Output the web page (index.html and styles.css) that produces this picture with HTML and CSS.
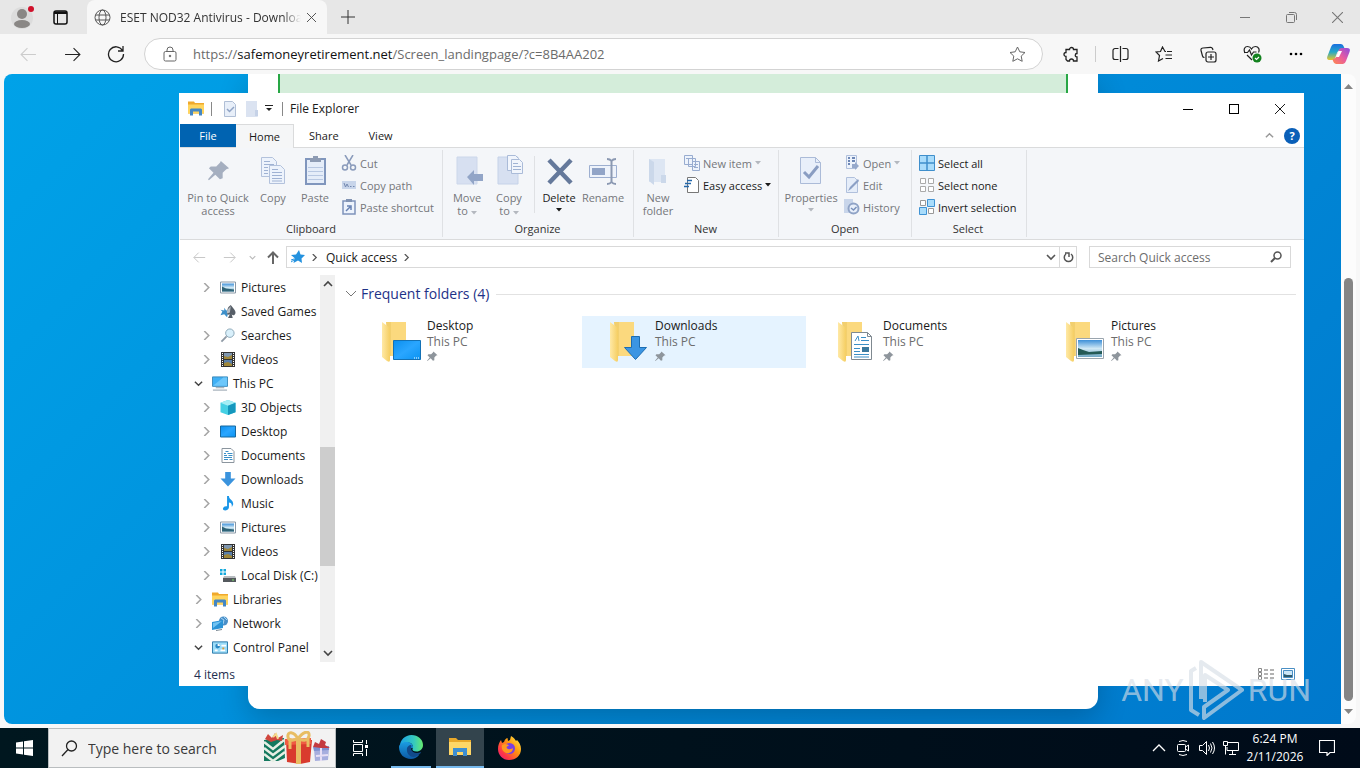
FILE: index.html
```html
<!DOCTYPE html>
<html lang="en">
<head>
    <meta charset="UTF-8">
    <meta name="viewport" content="width=device-width, initial-scale=1.0">
    <title>Desktop</title>
    <link rel="stylesheet" href="styles.css">
</head>
<body>
    <!-- shared icons -->
    <svg class="sprite" aria-hidden="true">
        <defs>
            <linearGradient id="gFolder" x1="0" x2="1"><stop offset="0" stop-color="#ffe9a6"/><stop offset="1" stop-color="#f5ce62"/></linearGradient>
            <linearGradient id="gBlue" x1="0" y1="0" x2="1" y2="1"><stop offset="0" stop-color="#0b8fee"/><stop offset=".5" stop-color="#2aa6ff"/><stop offset="1" stop-color="#0a93f2"/></linearGradient>
            <linearGradient id="gSky" x1="0" y1="0" x2="0" y2="1"><stop offset="0" stop-color="#3d8fd8"/><stop offset=".5" stop-color="#cfe8f5"/><stop offset="1" stop-color="#6fa7c4"/></linearGradient>
            <linearGradient id="gEdge1" x1="0" y1="0" x2="1" y2="0"><stop offset="0" stop-color="#1ba1e6"/><stop offset=".6" stop-color="#35c9c0"/><stop offset="1" stop-color="#66eb6e"/></linearGradient>
            <linearGradient id="gEdge2" x1="0" y1="0" x2="0" y2="1"><stop offset="0" stop-color="#1b9de2"/><stop offset="1" stop-color="#0c59a4"/></linearGradient>
            <linearGradient id="gFox" x1="1" y1="0" x2="0" y2="1"><stop offset="0" stop-color="#fff44f"/><stop offset=".4" stop-color="#ff980e"/><stop offset=".75" stop-color="#ff3647"/><stop offset="1" stop-color="#e31587"/></linearGradient>
            <linearGradient id="gCop1" x1="0" y1="0" x2="0" y2="1"><stop offset="0" stop-color="#1a6fe0"/><stop offset=".5" stop-color="#25a8c8"/><stop offset="1" stop-color="#e8c62a"/></linearGradient>
            <linearGradient id="gCop2" x1="1" y1="0" x2="0" y2="1"><stop offset="0" stop-color="#8a4be0"/><stop offset=".5" stop-color="#e85aa0"/><stop offset="1" stop-color="#ff8a4c"/></linearGradient>
        </defs>

        <symbol id="chev-right" viewBox="0 0 8 8"><path d="M2 0l4 4-4 4" fill="none" stroke="currentColor" stroke-width="1.4"/></symbol>
        <symbol id="chev-down" viewBox="0 0 10 10"><path d="M1 3l4 4 4-4" fill="none" stroke="currentColor" stroke-width="1.6"/></symbol>
        <symbol id="chev-up" viewBox="0 0 10 10"><path d="M1 7l4-4 4 4" fill="none" stroke="currentColor" stroke-width="1.6"/></symbol>
        <symbol id="caret" viewBox="0 0 6 4"><path d="M0 0h6L3 3.500z" fill="currentColor"/></symbol>
        <symbol id="arrow-left" viewBox="0 0 16 16"><path d="M15 8H1.500M7 2L1 8l6 6" fill="none" stroke="currentColor"/></symbol>
        <symbol id="arrow-right" viewBox="0 0 16 16"><path d="M1 8h13.500M9 2l6 6-6 6" fill="none" stroke="currentColor"/></symbol>
        <symbol id="close" viewBox="0 0 10 10"><path d="M0 0l10 10M10 0L0 10" fill="none" stroke="currentColor"/></symbol>

        <symbol id="folder-app" viewBox="0 0 16 14"><path d="M0 0h6l1 1.500h9V12H0z" fill="#f0a92c"/><path d="M0 3h16v9H0z" fill="#ffd55e"/><path d="M3 7h10l1 1v6h-3v-4H5v4H2V8z" fill="#4487c4"/></symbol>
        <symbol id="pin" viewBox="0 0 24 24"><path d="M14 1l9 8-3 1-4 4 0 6-3 1-5-5-7 6-1-1 6-7-5-5 2-2 6 0 4-4z" fill="currentColor"/></symbol>
        <symbol id="picture" viewBox="0 0 16 12"><path d="M.5.500h15v11H.5z" fill="#fff" stroke="#8a98a5"/><path d="M2 2h12v8H2z" fill="url(#gSky)"/><path d="M2 5l4 2 8 1v2H2z" fill="#2f6478"/></symbol>
        <symbol id="games" viewBox="0 0 16 16"><path d="M4 4l2 3 3-1-1 4-1 4-3-3-4 1 2-4-2-2 4 1z" fill="#3c8fc9"/><path d="M11 1c1 2 5 5 5 8s-3 4-4 2l1 4H8l2-4c-2 1-4 0-3-3s0-4 4-7z" fill="#565e67"/><path d="M11 2c-2 3-5 4-4 8l3-1z" fill="#b8bec5"/></symbol>
        <symbol id="lens" viewBox="0 0 16 16"><circle cx="10" cy="5.500" r="4.500" fill="#d9f0fb" stroke="#8aa5b5"/><path d="M6.500 9L1 14.500" stroke="#8f9aa5" stroke-width="2"/></symbol>
        <symbol id="film" viewBox="0 0 14 15"><path d="M0 0h14v15H0z" fill="#333"/><path d="M3 1h8v6H3z" fill="#7f97b0"/><path d="M3 8h8v6H3z" fill="#5a80ab"/><path d="M3 4l4 1 4-2v4H3zM3 11l4-1 4 2v2H3z" fill="#a08738"/><path d="M1.500 1v13M12.500 1v13" stroke="#fff" stroke-dasharray="1 1"/></symbol>
        <symbol id="pc" viewBox="0 0 17 15"><path d="M.5.500h16v10H.5z" fill="#3fb0f5" stroke="#3b87b8"/><path d="M1 10L12 1h4v9z" fill="#6cc7fb"/><path d="M4 12h9M1 14.500h15" stroke="#8a9aa5"/></symbol>
        <symbol id="cube" viewBox="0 0 16 16"><path d="M0 3l8-3 8 3v10l-8 3-8-3z" fill="#45d0e4"/><path d="M0 3l8-3 8 3-8 3z" fill="#a4eef5"/><path d="M8 6l8-3v10l-8 3z" fill="#1597bd"/></symbol>
        <symbol id="screen" viewBox="0 0 16 12"><path d="M.5.500h15v11H.5z" fill="url(#gBlue)" stroke="#17689f"/></symbol>
        <symbol id="doc" viewBox="0 0 13 15"><path d="M.5.500h9l3 3v11H.5z" fill="#fff" stroke="#8b959e"/><path d="M2.500 5.500h2M6 5.500h5M2.500 7.500h3M7 7.500h4M2.500 9.500h8M2.500 11.500h4M8 11.500h3M4 3.500h3" stroke="#3b8fc7"/></symbol>
        <symbol id="down" viewBox="0 0 16 16"><path d="M5 0h6v7h5l-8 8.500L0 7h5z" fill="#3a93dd"/></symbol>
        <symbol id="note" viewBox="0 0 12 16"><path d="M5 0h2c0 4 5 4 4.500 9L10 12c.5-4-1-5-3-5v5c0 2-2 3.500-4 3.500S0 14 1 12.500 3.500 11 5 11z" fill="#1a96e8"/></symbol>
        <symbol id="disk" viewBox="0 0 16 13"><path d="M0 0h2.500v2.500H0zM3.500 0H6v2.500H3.500zM0 3.500h2.500V6H0zM3.500 3.500H6V6H3.500z" fill="#12a8dc"/><path d="M4 7h11l1 2H3z" fill="#b7bcc0"/><path d="M3 9h13v4H3z" fill="#54595d"/><path d="M12 11h2" stroke="#7ce36a"/></symbol>
        <symbol id="network" viewBox="0 0 16 15"><circle cx="11.500" cy="5" r="4.500" fill="#4a8fc8"/><path d="M9 2l3 2-1 4M12 1l3 3" stroke="#a7d6f5" fill="none"/><path d="M0 6l11-2v8L0 14z" fill="#2b93d6"/><path d="M1 7l9-2-9 7z" fill="#72c3f2"/><path d="M4 14.500l6-1" stroke="#7a8791"/></symbol>
        <symbol id="panel" viewBox="0 0 17 13"><path d="M.5.500h16v12H.5z" fill="#9bdcf8" stroke="#2476a9"/><circle cx="6" cy="5" r="2.500" fill="#2b88c4"/><path d="M6 5V2.500A2.500 2.500 0 0 1 8.500 5z" fill="#fff"/><path d="M10 4.500h5M3 9.500h3M9 9.500h5" stroke="#fff" stroke-width="2"/><path d="M11 7.500h2" stroke="#e09a32" stroke-width="2"/></symbol>
        <symbol id="bigfolder" viewBox="0 0 40 44"><path d="M5 2h20v34H8z" fill="#f2cf6e"/><path d="M10 2h15v34H10z" fill="#fbd97e"/><path d="M1 2l8 6v32q0 3-3 1l-5-4z" fill="url(#gFolder)"/></symbol>
    </svg>

    <main class="browser">
        <div class="tabstrip">
            <button class="profile" aria-label="Profile"><svg width="26" height="26" viewBox="0 0 26 26"><circle cx="12" cy="14" r="11" fill="#dcdcdc"/><circle cx="12" cy="10" r="5" fill="#8a8785"/><ellipse cx="12" cy="20" rx="8" ry="4" fill="#8a8785"/><circle cx="21" cy="5" r="3" fill="#d0112b"/></svg></button>
            <button class="tab-actions" aria-label="Tab actions"><svg width="15" height="15" viewBox="0 0 15 15"><rect x="1" y="1" width="13" height="13" rx="2" fill="none" stroke="#111" stroke-width="1.500"/><path d="M1 1.500h13v2.500H1z" fill="#111"/><path d="M4.500 4v10" stroke="#111"/></svg></button>
            <div class="tab">
                <svg width="17" height="17" viewBox="0 0 17 17" fill="none" stroke="#555"><circle cx="8.500" cy="8.500" r="7.500"/><ellipse cx="8.500" cy="8.500" rx="3.500" ry="7.500"/><path d="M1.500 6h14M1.500 11h14"/></svg>
                <span class="tab-title">ESET NOD32 Antivirus - Downloa</span>
                <button class="tab-close" aria-label="Close tab"><svg width="9" height="9"><use href="#close"/></svg></button>
            </div>
            <button class="new-tab" aria-label="New tab"><svg width="14" height="14" viewBox="0 0 14 14"><path d="M7 0v14M0 7h14" stroke="#333"/></svg></button>
            <div class="browser-controls">
                <button aria-label="Minimize"><svg width="10" height="10" viewBox="0 0 10 10"><path d="M0 5.500h10" stroke="currentColor"/></svg></button>
                <button aria-label="Restore"><svg width="11" height="11" viewBox="0 0 11 11" fill="none" stroke="currentColor"><rect x=".5" y="2.500" width="8" height="8" rx="1"/><path d="M3 .5h5.500a2 2 0 0 1 2 2V8"/></svg></button>
                <button aria-label="Close"><svg width="11" height="11"><use href="#close"/></svg></button>
            </div>
        </div>

        <div class="toolbar">
            <button class="tool dim" aria-label="Back"><svg width="17" height="17"><use href="#arrow-left"/></svg></button>
            <button class="tool" aria-label="Forward"><svg width="17" height="17"><use href="#arrow-right"/></svg></button>
            <button class="tool" aria-label="Refresh"><svg width="18" height="18" viewBox="0 0 18 18" fill="none" stroke="currentColor" stroke-width="1.300"><path d="M15.500 5.500A7.500 7.500 0 1 0 16.500 9M16 1v5h-5"/></svg></button>
            <div class="omnibox">
                <svg width="14" height="16" viewBox="0 0 14 16" fill="none" stroke="#666"><rect x="1" y="5.500" width="12" height="9.500" rx="1.500"/><path d="M4 5.500V4a3 3 0 0 1 6 0v1.500"/><circle cx="7" cy="10" r=".8" fill="#666"/></svg>
                <div class="url" role="textbox" aria-label="Address">https://<b>safemoneyretirement.net</b>/Screen_landingpage/?c=8B4AA202</div>
                <button class="star" aria-label="Add to favorites"><svg width="17" height="17" viewBox="0 0 17 17"><path d="M8.500 1l2.300 4.800 5.200.7-3.800 3.600 1 5.200-4.700-2.500-4.700 2.500 1-5.200L1 6.500l5.200-.7z" fill="none" stroke="#666"/></svg></button>
            </div>
            <button class="tool" aria-label="Extensions"><svg width="17" height="17" viewBox="0 0 17 17"><path d="M3 3.500h3.500a2 2 0 0 1 4 0H14v4a1.700 1.700 0 1 0 0 3.500v4h-3.500a2 2 0 0 0-4 0H4.500L3 13.500v-3a2 2 0 0 1 0-4z" fill="none" stroke="#222" stroke-width="1.300"/></svg></button>
            <span class="tool-divider"></span>
            <button class="tool" aria-label="Split screen"><svg width="17" height="16" viewBox="0 0 17 16" fill="none" stroke="#222" stroke-width="1.200"><path d="M8.500 0v16M6.500 2.500H3a2 2 0 0 0-2 2v7a2 2 0 0 0 2 2h3.500M10.500 2.500H14a2 2 0 0 1 2 2v7a2 2 0 0 1-2 2h-3.500"/></svg></button>
            <button class="tool" aria-label="Favorites"><svg width="18" height="16" viewBox="0 0 18 16" fill="none" stroke="#222" stroke-width="1.200"><path d="M11 5.500h-1L7.500 1 5.500 5.500 1 6l3.500 3.500-1 5.500 4.500-2.500M12 5.500h5M10.500 9h6.500M10.500 12.500h6.500"/></svg></button>
            <button class="tool" aria-label="Collections"><svg width="17" height="17" viewBox="0 0 17 17" fill="none" stroke="#222" stroke-width="1.200"><rect x="6" y="6" width="10" height="10" rx="2"/><path d="M11 8v6M8 11h6M13 4l-.5-1.500a2 2 0 0 0-2-1.200L3 2a2 2 0 0 0-2 2.500L2.500 10a2 2 0 0 0 2 1.500"/></svg></button>
            <button class="tool" aria-label="Browser essentials"><svg width="19" height="18" viewBox="0 0 19 18" fill="none" stroke="#222" stroke-width="1.200"><path d="M2 8C0 4 2 1.500 4.500 1.500S8 3 8.500 4c.5-1 2-2.500 4-2.500 3 0 4.500 3 3 6M4 10l5 5M1 7.500h3.500L6.500 5l2 5L10.500 7h3"/><circle cx="14" cy="13" r="4.500" fill="#13821f" stroke="none"/><path d="M12 13l1.500 1.500L16 12" stroke="#fff"/></svg></button>
            <button class="tool" aria-label="Settings and more"><svg width="14" height="4" viewBox="0 0 14 4"><circle cx="2" cy="2" r="1.300"/><circle cx="7" cy="2" r="1.300"/><circle cx="12" cy="2" r="1.300"/></svg></button>
            <button class="tool copilot" aria-label="Copilot"><svg width="23" height="22" viewBox="0 0 23 22"><path d="M7 1h7q2 0 3 3l1 3h-4q-3 0-4 3l-1.500 4Q8 17 5 17H3q-4 0-2.500-4L4 4q1-3 3-3z" fill="url(#gCop1)"/><path d="M16 21H9q-2 0-3-3l-.5-2Q9 16 10 12l1.500-4Q12 5 15 5h5q4 0 2.500 4L19 18q-1 3-3 3z" fill="url(#gCop2)"/><path d="M11.500 8h3.500l-3 6H9z" fill="#fff"/></svg></button>
        </div>

        <div class="viewport">
            <div class="page">
                <div class="card"><div class="notice"></div></div>
            </div>
            <div class="scrollbar">
                <svg width="9" height="5" viewBox="0 0 9 5"><path d="M0 5h9L4.500 0z" fill="#858585"/></svg>
                <div class="track"><div class="thumb"></div></div>
                <svg width="9" height="5" viewBox="0 0 9 5"><path d="M0 0h9L4.500 5z" fill="#858585"/></svg>
            </div>
        </div>
    </main>

    <section class="explorer">
        <header class="titlebar">
            <svg width="16" height="15"><use href="#folder-app"/></svg>
            <span class="bar"></span>
            <button class="quick" aria-label="Properties"><svg width="14" height="16" viewBox="0 0 14 16"><path d="M1.500.500h8l3 3v12h-11z" fill="#e8eff9" stroke="#b0bfd6"/><path d="M4 8l2.500 2.500L11 6" fill="none" stroke="#8fa3c5" stroke-width="1.500"/></svg></button>
            <button class="quick" aria-label="New folder"><svg width="14" height="16" viewBox="0 0 14 16"><path d="M1 0h11v14l1 2H1z" fill="#dbe3f1"/><path d="M10 9h3v6h-3z" fill="#c6d2e7"/></svg></button>
            <button class="customize" aria-label="Customize toolbar"><svg width="8" height="7" viewBox="0 0 8 7"><path d="M0 .5h8" stroke="#222"/><path d="M1 3h6L4 6z" fill="#222"/></svg></button>
            <span class="bar"></span>
            <h1>File Explorer</h1>
            <div class="window-controls">
                <button aria-label="Minimize"><svg width="10" height="10" viewBox="0 0 10 10"><path d="M0 5.500h10" stroke="#000"/></svg></button>
                <button aria-label="Maximize"><svg width="10" height="10" viewBox="0 0 10 10"><rect x=".5" y=".5" width="9" height="9" fill="none" stroke="#000"/></svg></button>
                <button aria-label="Close"><svg width="10" height="10"><use href="#close"/></svg></button>
            </div>
        </header>

        <nav class="ribbon-tabs">
            <button class="file">File</button>
            <button class="active">Home</button>
            <button>Share</button>
            <button>View</button>
            <div class="ribbon-help">
                <svg width="9" height="9" class="collapse"><use href="#chev-up"/></svg>
                <button class="help" aria-label="Help">?</button>
            </div>
        </nav>

        <div class="ribbon">
            <div class="group clipboard">
                <div class="tools">
                    <button class="large wide"><svg width="32" height="32" viewBox="-6 -5 32 32" class="pin-big"><use href="#pin" width="22" height="22"/></svg>Pin to Quick access</button>
                    <button class="large"><svg width="32" height="32" viewBox="0 0 32 32"><g fill="#edf3fc" stroke="#b3c2dc"><path d="M4.500 2.500h11l4 4v15h-15z"/><path d="M12.500 10.500h11l4 4v14h-15z"/></g><path d="M7 6.500h6M7 9.500h10M7 12.500h4M7 15.500h4M7 18.500h4M15 14.500h6M15 17.500h10M15 20.500h10M15 23.500h10M15 26h10" stroke="#9fb2d3"/></svg>Copy</button>
                    <button class="large"><svg width="32" height="32" viewBox="0 0 32 32"><path d="M7 4h19v25H7z" fill="#e5edf9" stroke="#8096bd" stroke-width="2"/><path d="M11 3h3V1h5v2h3v4H11z" fill="#8d9bb3"/><path d="M9 12.500h15M9 16.500h15M9 20.500h15M9 24.500h15" stroke="#b8c8e2"/></svg>Paste</button>
                    <div class="small-list">
                        <button><svg width="16" height="16" viewBox="0 0 16 16" fill="none" stroke="#8a9bbb" stroke-width="1.500"><path d="M4 0l6 10M12 0L6 10"/><circle cx="4" cy="12.500" r="2.500"/><circle cx="12" cy="12.500" r="2.500"/></svg>Cut</button>
                        <button><svg width="16" height="16" viewBox="0 0 16 16"><path d="M1 4h14v8H1z" fill="#c8d5ea"/><path d="M3 6l1.500 4L6 7l1.500 3M9 9.500h1.500M12 9.500h1.500" stroke="#7388af" fill="none"/></svg>Copy path</button>
                        <button><svg width="16" height="16" viewBox="0 0 16 16"><path d="M2 2h12v13H2z" fill="#edf3fc" stroke="#7e93ba" stroke-width="1.500"/><path d="M5 0h6v3H5z" fill="#8193b3"/><path d="M5 12l4-4M6 7h4v4" fill="none" stroke="#6681b2" stroke-width="1.500"/></svg>Paste shortcut</button>
                    </div>
                </div>
                <div class="group-name">Clipboard</div>
            </div>

            <div class="group organize">
                <div class="tools">
                    <button class="large"><svg width="32" height="32" viewBox="0 0 32 32"><path d="M6 2h20v27H6z" fill="#d7e0f1" stroke="#ccd7ea"/><path d="M16 22l7-7v4h9v7h-9v4z" fill="#92a5c7"/></svg>Move<span>to <svg width="6" height="4"><use href="#caret"/></svg></span></button>
                    <button class="large"><svg width="32" height="32" viewBox="0 0 32 32"><path d="M5 2h20v27H5z" fill="#d7e0f1" stroke="#c5d2e8"/><g fill="#f1f5fc" stroke="#aabbd8"><path d="M14.500.500h8l3 3v12h-11z"/><path d="M18.500 4.500h8l3 3v11h-11z"/></g><path d="M20 8.500h5M20 11.500h8M20 14.500h8" stroke="#9fb2d3"/></svg>Copy<span>to <svg width="6" height="4"><use href="#caret"/></svg></span></button>
                    <span class="tool-sep"></span>
                    <button class="large enabled"><svg width="32" height="32" viewBox="0 0 32 32"><path d="M6 5l22 23M28 5L6 28" stroke="#65799b" stroke-width="4.500"/></svg>Delete<svg class="solo" width="6" height="4"><use href="#caret"/></svg></button>
                    <button class="large last"><svg width="32" height="32" viewBox="0 0 32 32"><path d="M2.500 10.500h27v12h-27z" fill="#eef3fb" stroke="#9dafd0"/><path d="M5 13h13v7H5z" fill="#91a4c7"/><path d="M24.500 5v23M20 4q3 0 4.500 2Q26 4 29 4M20 29q3 0 4.500-2 1.500 2 4.500 2" fill="none" stroke="#8b99b2" stroke-width="2"/></svg>Rename</button>
                </div>
                <div class="group-name">Organize</div>
            </div>

            <div class="group new">
                <div class="tools">
                    <button class="large"><svg width="32" height="32" viewBox="0 0 32 32"><path d="M7 4h16v18l1 5H7z" fill="#dde6f3"/><path d="M7 4l5 3v23l-5-4z" fill="#cbd8ea"/><path d="M19 20h5v8h-5z" fill="#cbd8ea"/></svg>New folder</button>
                    <div class="small-list">
                        <button><svg width="16" height="16" viewBox="0 0 16 16" fill="#edf3fc" stroke="#98acd0"><path d="M.5.500h8v9h-8zM4.500 3.500h7v8h-7zM8.500 6.500h7v9h-7z"/><path d="M10 9.500h4M10 12.500h4M2 3.500h4"/></svg>New item <svg width="6" height="4"><use href="#caret"/></svg></button>
                        <button class="enabled"><svg width="16" height="16" viewBox="0 0 16 16"><path d="M3.500.500h8l3 3v12h-11z" fill="#fff" stroke="#777"/><path d="M1 6.500h6M0 9.500h5M3 3.500h5" stroke="#2468ab" stroke-width="1.500"/></svg>Easy access <svg width="6" height="4"><use href="#caret"/></svg></button>
                    </div>
                </div>
                <div class="group-name">New</div>
            </div>

            <div class="group open">
                <div class="tools">
                    <button class="large props"><svg width="32" height="32" viewBox="0 0 32 32"><path d="M5.500 2.500h15l5 5v21h-20z" fill="#e8effa" stroke="#abbbd8"/><path d="M20.500 2.500v5h5" fill="none" stroke="#abbbd8"/><path d="M9 17l5 5 9-11" fill="none" stroke="#899dc2" stroke-width="3"/></svg>Properties<svg class="solo" width="6" height="4"><use href="#caret"/></svg></button>
                    <div class="small-list">
                        <button><svg width="16" height="16" viewBox="0 0 16 16"><path d="M2.500.500h10v13h-10z" fill="#edf3fc" stroke="#b0c0dc"/><path d="M4 3h2M4 6h2M4 9h2M8 3h3M8 6h3" stroke="#6d87b5" stroke-width="2"/><path d="M8 9h3V7l4 4-4 4v-2H8z" fill="#96a9cb"/></svg>Open <svg width="6" height="4"><use href="#caret"/></svg></button>
                        <button><svg width="16" height="16" viewBox="0 0 16 16"><path d="M2.500.500h8l3 3v12h-11z" fill="#e5edf9" stroke="#b0c0dc"/><path d="M4 14l2-4 8-8 1 2-8 8z" fill="#8ba0c5"/></svg>Edit</button>
                        <button><svg width="16" height="16" viewBox="0 0 16 16"><path d="M0 0h9v14H0z" fill="#c8d5ea"/><circle cx="9.500" cy="9.500" r="5" fill="#e8effa" stroke="#8fa3c6" stroke-width="2"/><path d="M7 9l2.500 2 3-3" fill="none" stroke="#7890ba" stroke-width="1.500"/></svg>History</button>
                    </div>
                </div>
                <div class="group-name">Open</div>
            </div>

            <div class="group select">
                <div class="tools">
                    <div class="small-list">
                        <button class="enabled"><svg width="16" height="16" viewBox="0 0 16 16"><path d="M.5.500h15v15H.5z" fill="#a9dcfb" stroke="#3f8fcc"/><path d="M8 0v16M0 8h16" stroke="#3f8fcc" stroke-width="1.500"/></svg>Select all</button>
                        <button class="enabled"><svg width="16" height="16" viewBox="0 0 16 16"><path d="M1.500 1.500h5v5h-5zM9.500 1.500h5v5h-5zM1.500 9.500h5v5h-5zM9.500 9.500h5v5h-5z" fill="#fff" stroke="#aaa"/></svg>Select none</button>
                        <button class="enabled"><svg width="16" height="16" viewBox="0 0 16 16"><path d="M1.500 1.500h5v5h-5zM9.500 9.500h5v5h-5z" fill="#fff" stroke="#999"/><path d="M8.500.500h7v7h-7zM.5 8.500h7v7h-7z" fill="#a9dcfb" stroke="#3f93d4"/></svg>Invert selection</button>
                    </div>
                </div>
                <div class="group-name">Select</div>
            </div>
        </div>

        <div class="address-row">
            <button class="nav-btn off" aria-label="Back"><svg width="13" height="13"><use href="#arrow-left"/></svg></button>
            <button class="nav-btn off" aria-label="Forward"><svg width="13" height="13"><use href="#arrow-right"/></svg></button>
            <button class="nav-btn narrow off" aria-label="Recent locations"><svg width="7" height="7"><use href="#chev-down"/></svg></button>
            <button class="nav-btn up" aria-label="Up"><svg width="12" height="13" viewBox="0 0 12 13"><path d="M6 13V1.500M1 6.500l5-5 5 5" fill="none" stroke="#666" stroke-width="2"/></svg></button>
            <div class="path">
                <svg width="14" height="14" viewBox="0 0 14 14"><path d="M8 0l1.500 4.500L14 5l-3.500 3.500L11 13 7 10.500 2.500 13l1-5L0 5l5-.5z" fill="#2492df"/><path d="M0 10l3-1M0 12l3-2" stroke="#2492df"/></svg>
                <svg class="crumb-arrow" width="7" height="7"><use href="#chev-right"/></svg>
                <span>Quick access</span>
                <svg class="crumb-arrow" width="7" height="7"><use href="#chev-right"/></svg>
                <button class="path-drop" aria-label="Previous locations"><svg width="10" height="10"><use href="#chev-down"/></svg></button>
                <button class="reload" aria-label="Refresh"><svg width="11" height="12" viewBox="0 0 11 12"><path d="M8 3a4.200 4.200 0 1 1-5 0M2 2h4V6" fill="none" stroke="#555" stroke-width="1.500"/></svg></button>
            </div>
            <div class="search">
                <input type="text" placeholder="Search Quick access" aria-label="Search Quick access">
                <svg width="12" height="12" viewBox="0 0 12 12"><circle cx="7.500" cy="4.500" r="3.500" fill="none" stroke="#555" stroke-width="1.500"/><path d="M5 7L1 11" stroke="#555" stroke-width="2"/></svg>
            </div>
        </div>

        <div class="content">
            <ul class="tree">
                <li class="deep"><svg class="twist"><use href="#chev-right"/></svg><svg class="ico"><use href="#picture"/></svg>Pictures</li>
                <li class="deep"><svg class="twist"></svg><svg class="ico"><use href="#games"/></svg>Saved Games</li>
                <li class="deep"><svg class="twist"><use href="#chev-right"/></svg><svg class="ico"><use href="#lens"/></svg>Searches</li>
                <li class="deep"><svg class="twist"><use href="#chev-right"/></svg><svg class="ico"><use href="#film"/></svg>Videos</li>
                <li><svg class="twist opened"><use href="#chev-down"/></svg><svg class="ico"><use href="#pc"/></svg>This PC</li>
                <li class="deep"><svg class="twist"><use href="#chev-right"/></svg><svg class="ico"><use href="#cube"/></svg>3D Objects</li>
                <li class="deep"><svg class="twist"><use href="#chev-right"/></svg><svg class="ico"><use href="#screen"/></svg>Desktop</li>
                <li class="deep"><svg class="twist"><use href="#chev-right"/></svg><svg class="ico"><use href="#doc"/></svg>Documents</li>
                <li class="deep"><svg class="twist"><use href="#chev-right"/></svg><svg class="ico"><use href="#down"/></svg>Downloads</li>
                <li class="deep"><svg class="twist"><use href="#chev-right"/></svg><svg class="ico"><use href="#note"/></svg>Music</li>
                <li class="deep"><svg class="twist"><use href="#chev-right"/></svg><svg class="ico"><use href="#picture"/></svg>Pictures</li>
                <li class="deep"><svg class="twist"><use href="#chev-right"/></svg><svg class="ico"><use href="#film"/></svg>Videos</li>
                <li class="deep"><svg class="twist"><use href="#chev-right"/></svg><svg class="ico"><use href="#disk"/></svg>Local Disk (C:)</li>
                <li><svg class="twist"><use href="#chev-right"/></svg><svg class="ico"><use href="#folder-app"/></svg>Libraries</li>
                <li><svg class="twist"><use href="#chev-right"/></svg><svg class="ico"><use href="#network"/></svg>Network</li>
                <li><svg class="twist opened"><use href="#chev-down"/></svg><svg class="ico"><use href="#panel"/></svg>Control Panel</li>
            </ul>
            <div class="tree-scroll">
                <svg width="10" height="10"><use href="#chev-up"/></svg>
                <div class="tree-track"><div class="tree-thumb"></div></div>
                <svg width="10" height="10"><use href="#chev-down"/></svg>
            </div>
            <div class="files">
                <h2><svg width="12" height="12" viewBox="0 0 12 12"><path d="M1 3l5 5 5-5" fill="none" stroke="currentColor"/></svg>Frequent folders (4)</h2>
                <div class="folders">
                    <div class="folder">
                        <svg width="40" height="44" viewBox="0 0 40 44"><use href="#bigfolder"/><path d="M12.500 20.500h27v19h-27z" fill="url(#gBlue)" stroke="#1371b5"/><path d="M33 38h6" stroke="#fff" stroke-dasharray="1 1"/></svg>
                        <div class="info"><div>Desktop</div><div class="where">This PC</div><svg class="pinned"><use href="#pin"/></svg></div>
                    </div>
                    <div class="folder hover">
                        <svg width="40" height="44" viewBox="0 0 40 44"><use href="#bigfolder"/><path d="M22.500 16.500h8v11h7l-11 12-11-12h7z" fill="#3b95e3" stroke="#1c6db2"/></svg>
                        <div class="info"><div>Downloads</div><div class="where">This PC</div><svg class="pinned"><use href="#pin"/></svg></div>
                    </div>
                    <div class="folder">
                        <svg width="40" height="44" viewBox="0 0 40 44"><use href="#bigfolder"/><path d="M14.500 12.500h16l4 4v23h-20z" fill="#fff" stroke="#7f8990"/><path d="M30.500 12.500v4h4" fill="none" stroke="#7f8990"/><path d="M18 21l3-5 1 5M24 17.500h5M24 20.500h8M17 24.500h15M17 28.500h6M17 31.500h6M17 34.500h15M17 37h15" stroke="#3b8fc7" fill="none"/><path d="M25 27h7v5h-7z" fill="#3a789c"/></svg>
                        <div class="info"><div>Documents</div><div class="where">This PC</div><svg class="pinned"><use href="#pin"/></svg></div>
                    </div>
                    <div class="folder">
                        <svg width="40" height="44" viewBox="0 0 40 44"><use href="#bigfolder"/><path d="M11.500 18.500h27v20h-27z" fill="#fff" stroke="#9aa5ae"/><path d="M13 20h24v17H13z" fill="url(#gSky)"/><path d="M13 28l5 2 6 2 13-1v3l-24 1z" fill="#245a56"/></svg>
                        <div class="info"><div>Pictures</div><div class="where">This PC</div><svg class="pinned"><use href="#pin"/></svg></div>
                    </div>
                </div>
            </div>
        </div>

        <footer class="status">
            <span>4 items</span>
            <div class="views">
                <button aria-label="Details view"><svg width="16" height="12" viewBox="0 0 16 12"><path d="M.5.500h3v3h-3zM.5 4.500h3v3h-3zM.5 8.500h3v3h-3z" fill="none" stroke="#888"/><path d="M6 2h10M6 6h10M6 10h10" stroke="#666" stroke-dasharray="4 2"/></svg></button>
                <button aria-label="Large icons view"><svg width="14" height="12" viewBox="0 0 14 12"><path d="M.5.500h13v11H.5z" fill="#fff" stroke="#4a8fc4"/><path d="M2.500 2.500h9v7h-9z" fill="#cbe6f7" stroke="#4a8fc4"/><path d="M3 6l3 1 5 0v2H3z" fill="#305a6b"/></svg></button>
            </div>
        </footer>
    </section>

    <div class="watermark">
        <span>ANY</span>
        <svg width="56" height="64" viewBox="0 0 56 64" fill="none" stroke="currentColor" stroke-width="4" stroke-linejoin="round"><path d="M13 41V4l41 28-38 28V49l24-17-23-15v27M8 10L3 13v39l8 5"/></svg>
        <span>RUN</span>
    </div>

    <footer class="taskbar">
        <button class="start" aria-label="Start"><svg width="17" height="16" viewBox="0 0 17 16"><path d="M0 2.500L7 1.500v6H0zM8 1.300L17 0v7.500H8zM0 8.500h7v6l-7-1zM8 8.500h9V16l-9-1.300z" fill="#fff"/></svg></button>
        <label class="task-search">
            <svg width="17" height="17" viewBox="0 0 17 17" fill="none" stroke="#222" stroke-width="1.300"><circle cx="10.500" cy="6" r="5"/><path d="M7 9.500L1 16"/></svg>
            <input type="text" placeholder="Type here to search">
            <svg width="68" height="34" viewBox="0 0 68 34">
                <path d="M1 9l20-2 1 20-7 3H1z" fill="#15795f"/><path d="M1 11l9 7 11-9M1 17l9 7 12-9M1 23l9 7 12-9" stroke="#e7efe5" stroke-width="2.500" fill="none"/><path d="M2 8l3-5 4 4 3-5 3 5 5-3-1 6-5-1-6 2z" fill="#d1463d"/><path d="M10 6l3-3 2 5" fill="none" stroke="#f4d98a" stroke-width="2"/>
                <path d="M23 9h26l-2 22-10 2-13-2z" fill="#d93b2e"/><path d="M22 8l26-1v6l-26 1z" fill="#ef5b43"/><path d="M33 7h5v26h-5z" fill="#e8bd63"/><path d="M35 8c-4-8-11-8-10-2s6 2 10 2c5-8 12-9 11-3s-7 4-11 3M27 7v11M45 7v9" fill="none" stroke="#e8bd63" stroke-width="3"/>
                <path d="M51 18l15-1-1 12-13 1z" fill="#a7aede"/><path d="M50 16l16-1v4l-15 1z" fill="#7d8fd0"/><path d="M58 17v13M53 25l12-1" stroke="#e7dff5" stroke-width="2"/><path d="M58 17l-8-1 2-5 4 2 2-5 5 3-1 3 5 3z" fill="#c43a40"/>
            </svg>
        </label>
        <button class="task" aria-label="Task view"><svg width="17" height="16" viewBox="0 0 17 16" fill="none" stroke="#fff"><path d="M1.500 4.500h9v7h-9zM1.500 0v2.500h9V0M1.500 16v-2.500h9V16M14.500 0v4M14.500 9v7"/><path d="M13 6.500h3" stroke-width="3"/></svg></button>
        <button class="task running edge" aria-label="Microsoft Edge"><svg width="24" height="24" viewBox="0 0 24 24"><path d="M1 11C1 5 6 0 12.500 0 19 0 24 4.500 24 10c0 4-3 6.500-6.500 6.500-3 0-4.500-1-4-2.500 1.500-3-.5-6.500-4.500-6.500C5 7.500 2 9 1 11z" fill="url(#gEdge1)"/><path d="M0 12C0 9 4 6.500 8.500 7c4 .5 6 3.500 5.500 6-4-1-6 8 6 7-2 2.500-5 4-8 4-7 0-12-5-12-12z" fill="url(#gEdge2)"/><path d="M8 13c-1 6 4 11 10 8 2-1 4-3 4-4-4 2-9 1-10-3 0-2 1-3 0-4-1-.5-3.500 1-4 3z" fill="#114a8b"/></svg></button>
        <button class="task running current" aria-label="File Explorer"><svg width="22" height="20" viewBox="0 0 22 20"><path d="M0 1h7l2 2h13v15H0z" fill="#eaa92a"/><path d="M0 5h22v13H0z" fill="#ffd767"/><path d="M4 11h14v8h-4v-4H8v4H4z" fill="#3f8fd0"/></svg></button>
        <button class="task" aria-label="Firefox"><svg width="24" height="24" viewBox="0 0 24 24"><path d="M12 24C5.500 24 1 19 1 13c0-4 1-6 3-9l1 3 2-1c1-3 2.500-4 3.500-4L11 5l2-1 1-4c3 2 4 3 5 5l1-1c2 2 4 5 4 9 0 6.500-5 11-12 11z" fill="url(#gFox)"/><circle cx="12.500" cy="12.500" r="5.500" fill="#7a3fe0"/><path d="M5 9c3-2 6-1 7 1-3 0-3 2-1 3 2 .5 4 0 5-1 0 4-4 6-7 5-3-1-5-4-4-8z" fill="#ff9a1f"/></svg></button>
        <div class="tray">
            <svg width="24" height="12" viewBox="-6 0 24 12"><path d="M0 9l6-6 6 6" fill="none" stroke="#fff" stroke-width="1.300"/></svg>
            <svg width="24" height="16" viewBox="-6 0 24 16" fill="none" stroke="#fff"><rect x=".5" y="4.500" width="8" height="7" rx="1"/><path d="M8.500 7l3-2v6l-3-2M2 1.500q4-2 8 0M2 14.500q4 2 8 0"/></svg>
            <svg width="24" height="16" viewBox="-4 0 24 16" fill="none" stroke="#fff"><path d="M.5 5.500h3l4-4v13l-4-4h-3zM9.500 5q2 3 0 6M11.500 3.500q3 4.500 0 9M13.500 2q4 6 0 12"/></svg>
            <svg width="24" height="16" viewBox="-4 0 24 16" fill="none" stroke="#fff"><path d="M5 2.500h10.500v8H4V7M.5 1.500h4v4h-4zM2.500 5.500v9M9.500 10.500v4M6 14.500h7"/></svg>
            <time class="clock">6:24 PM<br>2/11/2026</time>
            <button class="notify" aria-label="Notifications"><svg width="16" height="16" viewBox="0 0 16 16"><path d="M.5.500h15v12H11l-3 3v-3H.5z" fill="none" stroke="#fff" stroke-width="1.200"/></svg></button>
            <span class="show-desktop"></span>
        </div>
    </footer>
</body>
</html>
```

FILE: styles.css
```css
* {
    box-sizing: border-box;
}
body {
    margin: 0;
    height: 100vh;
    display: flex;
    flex-direction: column;
    overflow: hidden;
    position: relative;
    font-family: "Open Sans", "Noto Sans", sans-serif;
    font-size: 12px;
    color: #1a1a1a;
    background: #f7f7f7;
}
button {
    display: flex;
    align-items: center;
    justify-content: center;
    padding: 0;
    border: 0;
    background: none;
    color: inherit;
    font: inherit;
}
input {
    min-width: 0;
    padding: 0;
    border: 0;
    outline: 0;
    background: none;
    font: inherit;
}
svg {
    flex: none;
}
.sprite {
    position: absolute;
    width: 0;
    height: 0;
}

/* browser */
.browser {
    flex: 1;
    min-height: 0;
    display: flex;
    flex-direction: column;
}
.tabstrip {
    display: flex;
    height: 34px;
    background: #e7e7e7;
}
.profile {
    width: 42px;
    padding-left: 4px;
}
.tab-actions {
    width: 36px;
}
.tab {
    display: flex;
    align-items: center;
    width: 240px;
    margin-left: 9px;
    padding: 0 11px 0 7px;
    border-radius: 8px 8px 0 0;
    background: #f7f7f7;
}
.tab-title {
    flex: 1;
    margin-left: 9px;
    overflow: hidden;
    white-space: nowrap;
    color: #333;
    mask-image: linear-gradient(to right, #000 90%, transparent);
}
.tab-close {
    width: 9px;
    margin-left: 6px;
    color: #444;
}
.new-tab {
    width: 42px;
}
.browser-controls,
.window-controls {
    display: flex;
    margin-left: auto;
}
.browser-controls {
    color: #777;
}
.browser-controls button,
.window-controls button {
    width: 46px;
}
.toolbar {
    display: flex;
    align-items: center;
    height: 40px;
    padding: 0 2px 0 6px;
    background: #f7f7f7;
}
.tool {
    width: 44px;
    height: 32px;
    color: #222;
}
.tool.dim {
    color: #ccc;
}
.tool.copilot {
    width: 40px;
}
.tool-divider {
    width: 1px;
    height: 16px;
    margin: 0 2px;
    background: #ccc;
}
.omnibox {
    flex: 1;
    display: flex;
    align-items: center;
    height: 32px;
    margin: 0 6px;
    padding: 0 16px 0 18px;
    border: 1px solid #d3d3d3;
    border-radius: 16px;
    background: #fff;
}
.url {
    flex: 1;
    margin-left: 16px;
    font-size: 13px;
    color: #6b6b6b;
}
.url b {
    font-weight: normal;
    color: #111;
}
.viewport {
    flex: 1;
    min-height: 0;
    display: flex;
    margin: 0 4px 4px;
    border-radius: 8px;
    overflow: hidden;
    background: #fcfcfc;
}
.page {
    flex: 1;
    display: flex;
    justify-content: center;
    padding-bottom: 15px;
    background: linear-gradient(135deg, #00a2e8, #0078cc);
}
.card {
    width: 850px;
    padding: 0 30px;
    border-radius: 0 0 12px 12px;
    background: #fff;
    box-shadow: 0 10px 30px rgba(0, 0, 0, 0.2);
}
.notice {
    height: 60px;
    border: solid #28a745;
    border-width: 0 2px;
    background: #d4edda;
}
.scrollbar {
    width: 15px;
    display: flex;
    flex-direction: column;
    align-items: center;
    padding: 10px 0;
}
.track {
    flex: 1;
    display: flex;
    align-items: flex-end;
    padding: 8px 0;
}
.thumb {
    width: 9px;
    height: 70%;
    border-radius: 5px;
    background: #858585;
}

/* file explorer window */
.explorer {
    position: absolute;
    top: 93px;
    right: 56px;
    bottom: 82px;
    left: 179px;
    display: flex;
    flex-direction: column;
    padding-left: 1px;
    background: #fff;
}
.titlebar {
    display: flex;
    align-items: center;
    height: 31px;
    padding: 0 1px 0 8px;
}
.titlebar h1 {
    margin: 0;
    font-size: 12px;
    font-weight: normal;
}
.titlebar .window-controls {
    height: 31px;
}
.bar {
    width: 1px;
    height: 14px;
    margin: 0 7px;
    background: #888;
}
.quick {
    width: 22px;
}
.customize {
    width: 12px;
}
.ribbon-tabs {
    display: flex;
    height: 24px;
    border-bottom: 1px solid #dadbdc;
}
.ribbon-tabs button {
    padding: 0 15px;
    font-size: 11px;
}
.ribbon-tabs .file {
    width: 56px;
    color: #fff;
    background: #0063b1;
}
.ribbon-tabs .active {
    height: 24px;
    width: 58px;
    border: solid #dadbdc;
    border-width: 1px 1px 0 0;
    background: #f5f6f7;
}
.ribbon-help {
    display: flex;
    align-items: center;
    gap: 10px;
    margin-left: auto;
    padding-right: 4px;
}
.collapse {
    color: #999;
}
.ribbon-tabs .help {
    width: 16px;
    height: 16px;
    padding: 0;
    border-radius: 50%;
    color: #fff;
    background: #0a5fb8;
    font-weight: bold;
}
.ribbon {
    display: flex;
    height: 92px;
    border-bottom: 1px solid #dadbdc;
    background: #f4f6f9;
    font-size: 11px;
}
.group {
    display: flex;
    flex-direction: column;
    flex: none;
    margin: 2px 0;
    border-right: 1px solid #dfe1e4;
}
.clipboard { width: 263px; padding-left: 4px; }
.organize { width: 191px; padding-left: 3px; }
.new { width: 145px; padding-left: 3px; }
.open { width: 133px; padding-left: 4px; }
.select { width: 115px; padding-left: 2px; }
.tools {
    flex: 1;
    display: flex;
}
.large {
    flex-direction: column;
    justify-content: flex-start;
    width: 42px;
    padding-top: 5px;
    color: #75777b;
    line-height: 13px;
    text-align: center;
}
.large > svg:first-child {
    margin-bottom: 4px;
}
.large.wide { width: 68px; }
.large.props { width: 56px; }
.large.last { width: 46px; }
.large .solo {
    margin-top: 4px;
}
.ribbon use[href="#caret"] {
    color: #b4b8bf;
}
.ribbon .enabled use[href="#caret"] {
    color: #1a1a1a;
}
.ribbon .pin-big {
    color: #a5afc0;
}
.tool-sep {
    width: 1px;
    margin: 6px 3px 8px 4px;
    background: #dfe1e4;
}
.small-list {
    margin: 2px 0 0 5px;
}
.small-list button {
    height: 22px;
    gap: 3px;
    color: #75777b;
    white-space: nowrap;
}
.ribbon .enabled {
    color: #1a1a1a;
}
.group-name {
    height: 16px;
    padding-right: 4px;
    line-height: 16px;
    text-align: center;
    color: #333;
}
.address-row {
    display: flex;
    align-items: center;
    height: 35px;
    padding: 0 13px 1px 4px;
}
.nav-btn {
    width: 30px;
    height: 22px;
    color: #555;
}
.nav-btn.narrow {
    width: 16px;
}
.nav-btn.up {
    width: 26px;
}
.nav-btn.off {
    color: #bbb;
}
.path,
.search {
    display: flex;
    align-items: center;
    height: 22px;
    border: 1px solid #d9d9d9;
}
.path {
    flex: 1;
    padding-left: 4px;
}
.crumb-arrow {
    margin: 0 8px 0 6px;
    color: #555;
}
.path-drop {
    width: 16px;
    margin-left: auto;
    color: #555;
}
.reload {
    width: 17px;
    height: 20px;
    border-left: 1px solid #d9d9d9;
}
.search {
    width: 202px;
    margin-left: 12px;
    padding: 0 8px;
}
.search input {
    flex: 1;
}
.search input::placeholder {
    color: #6d6d6d;
}
.content {
    flex: 1;
    min-height: 0;
    display: flex;
}
.tree {
    width: 140px;
    margin: 0;
    padding: 0;
    list-style: none;
    overflow: hidden;
}
.tree li {
    display: flex;
    align-items: center;
    height: 24px;
    padding-left: 14px;
    white-space: nowrap;
}
.tree .deep {
    padding-left: 22px;
}
.twist {
    width: 9px;
    height: 9px;
    margin-right: 9px;
    color: #a6a6a6;
}
.twist.opened {
    color: #444;
}
.ico {
    width: 16px;
    height: 15px;
    margin-right: 5px;
}
.tree-scroll {
    width: 15px;
    display: flex;
    flex-direction: column;
    align-items: center;
    padding: 4px 0;
    color: #444;
    background: #f0f0f0;
}
.tree-track {
    flex: 1;
    align-self: stretch;
    display: flex;
    flex-direction: column;
    justify-content: flex-end;
    padding-bottom: 82px;
}
.tree-thumb {
    height: 119px;
    background: #cdcdcd;
}
.files {
    flex: 1;
    padding: 8px 8px 0 10px;
}
.files h2 {
    display: flex;
    align-items: center;
    gap: 4px;
    margin: 0;
    font-size: 14px;
    line-height: 22px;
    font-weight: normal;
    color: #1e3287;
}
.files h2::after {
    content: "";
    flex: 1;
    height: 1px;
    margin-left: 3px;
    background: #e2e2e2;
}
.files h2 svg {
    color: #777;
}
.folders {
    display: grid;
    grid-template-columns: repeat(auto-fill, 224px);
    gap: 4px;
    margin: 11px 0 0 9px;
}
.folder {
    display: flex;
    height: 52px;
    padding: 4px 0 0 27px;
}
.folder.hover {
    background: #e5f3ff;
}
.info {
    margin: -2px 0 0 6px;
    line-height: 16px;
}
.where {
    color: #6d6d6d;
}
.pinned {
    display: block;
    width: 11px;
    height: 11px;
    margin-top: 1px;
    color: #8e959c;
}
.status {
    display: flex;
    align-items: center;
    height: 24px;
    padding: 0 9px 0 14px;
    color: #1e2f50;
}
.views {
    display: flex;
    gap: 7px;
    margin-left: auto;
}

/* watermark over the lower right corner */
.watermark {
    position: absolute;
    right: 49px;
    bottom: 46px;
    display: flex;
    align-items: center;
    gap: 4px;
    font-family: Roboto, sans-serif;
    font-size: 32px;
    color: rgba(215, 222, 230, 0.65);
    pointer-events: none;
}

/* taskbar */
.taskbar {
    display: flex;
    height: 40px;
    background: linear-gradient(to right, #00171f, #000b19);
    color: #fff;
}
.start {
    width: 48px;
}
.task-search {
    display: flex;
    align-items: center;
    width: 288px;
    padding: 0 4px 0 12px;
    border: 1px solid #b9bdbf;
    background: #f2f2f2;
}
.task-search input {
    flex: 1;
    margin-left: 10px;
    font-size: 14px;
}
.task-search input::placeholder {
    color: #3a3a3a;
}
.task {
    width: 48px;
    margin-right: 1px;
}
.task.running {
    border-bottom: 2px solid #76b9ed;
}
.task.edge {
    width: 40px;
    margin: 0 5px 0 6px;
}
.task.current {
    background: #33444d;
}
.tray {
    display: flex;
    align-items: center;
    margin-left: auto;
}
.clock {
    width: 64px;
    line-height: 18px;
    text-align: center;
}
.notify {
    width: 40px;
    height: 40px;
}
.show-desktop {
    width: 13px;
    height: 40px;
}
```
